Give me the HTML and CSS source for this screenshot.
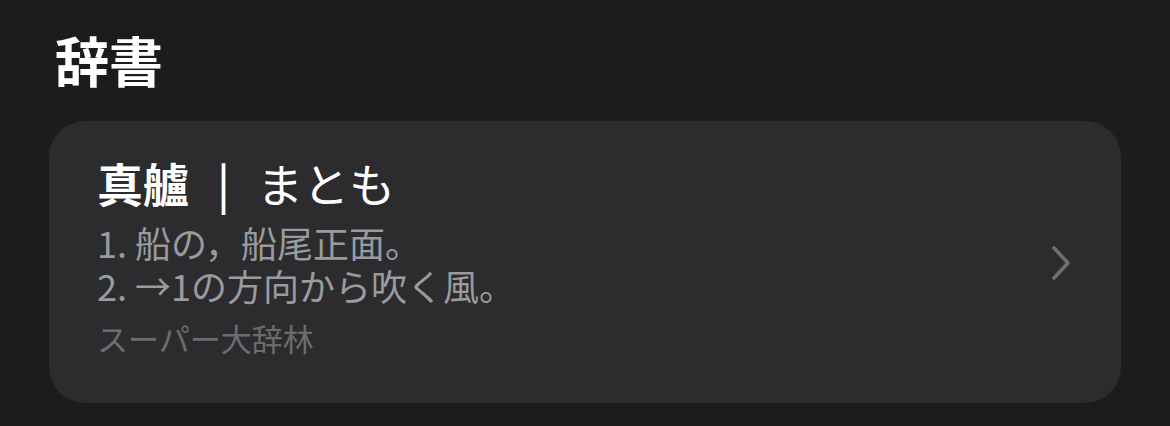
FILE: index.html
```html
<!DOCTYPE html>
<html lang="ja">
<head>
<meta charset="utf-8">
<link rel="stylesheet" href="styles.css">
</head>
<body>
<main class="page">
  <h1 class="title">辞書</h1>
  <section class="card">
    <div class="content">
      <div class="headline"><span class="word">真艫</span><span class="sep">|</span><span class="reading">まとも</span></div>
      <div class="defs">
        <p class="def">1. 船の，船尾正面。</p>
        <p class="def">2. →1の方向から吹く風。</p>
      </div>
      <div class="source">スーパー大辞林</div>
    </div>
    <svg class="chevron" width="22" height="36" viewBox="0 0 22 36"><path d="M4 3 L18 18 L4 33" fill="none" stroke="#6e6e73" stroke-width="3.6" stroke-linecap="round" stroke-linejoin="round"/></svg>
  </section>
</main>
</body>
</html>
```
FILE: styles.css
```css
html, body {
  margin: 0;
  padding: 0;
  background: #1c1c1e;
}
body {
  width: 1170px;
  height: 426px;
  overflow: hidden;
  font-family: "Noto Sans CJK JP", "Noto Sans", sans-serif;
}
.page {
  padding: 19px 49px 0 49px;
}
.title {
  margin: 0 0 0 6px;
  font-size: 54px;
  font-weight: 700;
  color: #ffffff;
  line-height: 82px;
}
.card {
  margin-top: 20px;
  background: #2c2c2e;
  border-radius: 36px;
  height: 282px;
  box-sizing: border-box;
  padding: 33px 49px 0 48px;
  display: flex;
  align-items: flex-start;
  justify-content: space-between;
}
.content {
  display: flex;
  flex-direction: column;
}
.headline {
  display: flex;
  align-items: baseline;
  color: #ffffff;
  font-size: 46px;
  line-height: 56px;
}
.word {
  font-weight: 700;
}
.sep {
  margin: 0 27px 0 28px;
  font-weight: 500;
}
.reading {
  font-weight: 400;
}
.defs {
  margin-top: 11px;
  color: #9a9a9f;
  font-size: 36px;
}
.def {
  margin: 0;
  line-height: 43px;
  white-space: nowrap;
}
.source {
  margin-top: 13px;
  color: #6c6c70;
  font-size: 31px;
  line-height: 36px;
}
.chevron {
  display: block;
  margin-top: 91px;
}
```
